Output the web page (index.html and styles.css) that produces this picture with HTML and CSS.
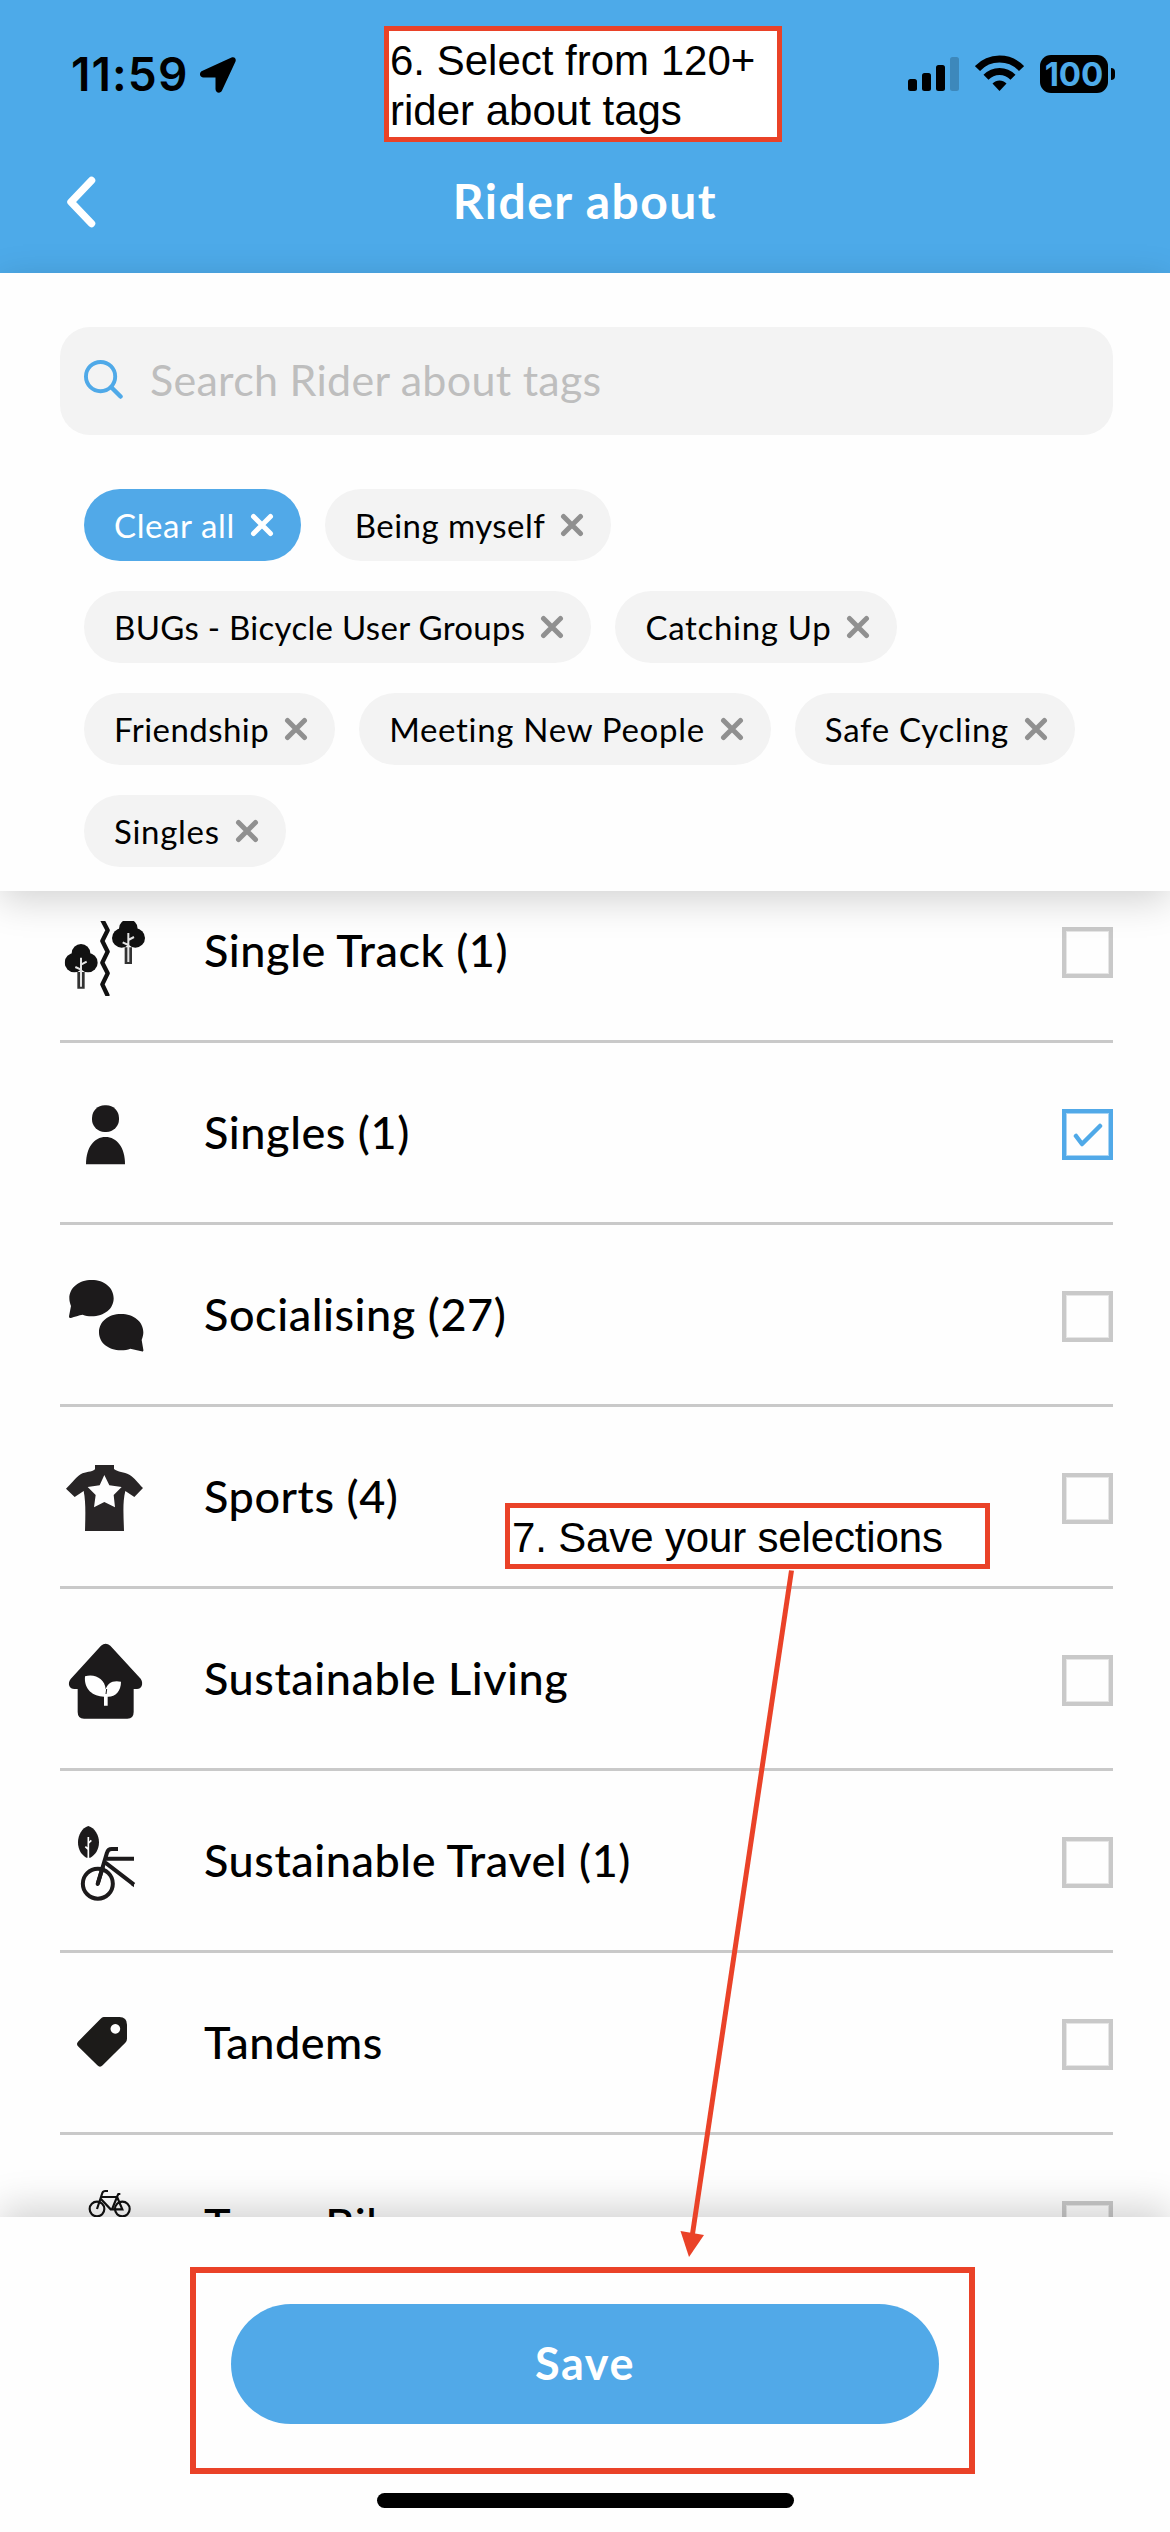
FILE: index.html
```
<!DOCTYPE html>
<html lang="en">
<head>
<meta charset="utf-8">
<title>Rider about</title>
<link rel="stylesheet" href="styles.css">
</head>
<body>
<svg class="defs" aria-hidden="true">
  <symbol id="close" viewBox="0 0 24 24"><path d="M3.5 3.5 20.5 20.5M20.5 3.5 3.5 20.5" fill="none" stroke="currentColor" stroke-width="5" stroke-linecap="round"/></symbol>
  <symbol id="tree" viewBox="0 0 100 136">
    <circle cx="49" cy="28" r="28" fill="#111"/><circle cx="29" cy="56" r="29" fill="#111"/><circle cx="70" cy="56" r="29" fill="#111"/>
    <path d="M38 84h22v50H38z" fill="#333"/>
    <path d="M49 128V41M49 62l17-9M49 77l-17-8" fill="none" stroke="#e4e4e4" stroke-width="6"/>
  </symbol>
</svg>
<div class="screen">
  <header class="header">
    <div class="status">
      <div class="clock">11:59
        <svg class="location" viewBox="0 0 36 36"><path d="M31.5 .5C34.5-.5 36.5 1.500 35.500 4.500L22 33.500C20.500 37 15.500 36 15.500 32V20.500H3.500C-.5 20.500-1.200 15.500 2 14Z"/></svg>
      </div>
      <div class="indicators">
        <svg class="signal" viewBox="0 0 51 34"><rect y="22" width="9" height="12" rx="2.5"/><rect x="14" y="16" width="9" height="18" rx="2.500"/><rect x="28" y="8" width="9" height="26" rx="2.500"/><rect x="42" width="9" height="34" rx="2.500" fill="#3d88bb"/></svg>
        <svg class="wifi" viewBox="0 0 49 36"><g fill="none" stroke="#000" stroke-width="7"><path d="M2.500 13.500C14.500 .8 34.500 .8 46.500 13.500"/><path d="M11 22.200C18.500 14.500 30.500 14.500 38 22.200"/></g><path d="M17.500 28.500C21.500 24.500 27.500 24.500 31.500 28.500L24.500 36Z"/></svg>
        <div class="battery"><span class="battery-level">100</span><span class="battery-tip"></span></div>
      </div>
    </div>
    <div class="titlebar">
      <svg class="back" viewBox="0 0 30 52"><path d="M25.500 4.500 5 26 25.500 47.500" fill="none" stroke="#fff" stroke-width="7.500" stroke-linecap="round" stroke-linejoin="round"/></svg>
      <h1 class="title">Rider about</h1>
    </div>
  </header>

  <section class="filters">
    <div class="search">
      <svg class="search-icon" viewBox="0 0 40 40"><g fill="none" stroke="#4fa9e8" stroke-width="4"><circle cx="17" cy="17" r="15"/><path d="M28 28l9.500 9.500" stroke-linecap="round" stroke-width="4.500"/></g></svg>
      <span class="placeholder">Search Rider about tags</span>
    </div>
    <div class="chips">
      <button class="chip chip-clear">Clear all<svg class="x"><use href="#close"/></svg></button>
      <button class="chip chip-snug">Being myself<svg class="x"><use href="#close"/></svg></button>
      <button class="chip chip-tight">BUGs - Bicycle User Groups<svg class="x"><use href="#close"/></svg></button>
      <button class="chip">Catching Up<svg class="x"><use href="#close"/></svg></button>
      <button class="chip chip-snug">Friendship<svg class="x"><use href="#close"/></svg></button>
      <button class="chip">Meeting New People<svg class="x"><use href="#close"/></svg></button>
      <button class="chip">Safe Cycling<svg class="x"><use href="#close"/></svg></button>
      <button class="chip">Singles<svg class="x"><use href="#close"/></svg></button>
    </div>
  </section>

  <main class="list">
    <div class="row">
      <svg class="icon" viewBox="60 48 270 270"><svg x="60" y="93" width="270" height="240" viewBox="60 93 270 240">
        <use href="#tree" x="74" y="162" width="100" height="136"/><use href="#tree" x="216" y="88" width="100" height="136"/>
        <path d="M187 90 203 121 187 153 203 185 187 218 203 250 187 283 202 315" fill="none" stroke="#111" stroke-width="13" stroke-linecap="round" stroke-linejoin="round"/></svg></svg>
      <span class="label">Single Track (1)</span><span class="box"></span>
    </div>
    <div class="row">
      <svg class="icon" viewBox="60 594 270 270"><g fill="#1c1a1b"><rect x="156" y="646" width="81" height="80" rx="38"/><path d="M138 823C138 773 162 741 196.500 741S255 773 255 823Z"/></g></svg>
      <span class="label">Singles (1)</span>
      <span class="box box-on"><svg class="tick" viewBox="0 0 30 24"><path d="M3 13 9 21 27 3" fill="none" stroke="#4fa9e8" stroke-width="4.500" stroke-linecap="round" stroke-linejoin="round"/></svg></span>
    </div>
    <div class="row">
      <svg class="icon" viewBox="60 60 270 270"><g fill="#1c1a1b"><path d="M155 90C193 90 221 113 221 145S193 199 155 199C144 199 136 197 128 194C117 196 104 200 93 204C89 205 87 203 87 199L93 168C90 160 88 153 88 145C88 113 117 90 155 90Z"/><path d="M243 192C205 192 177 215 177 247S205 301 243 301C254 301 263 299 271 296C282 299 293 301 304 304C309 305 311 303 310 299L305 270C308 262 310 255 310 247C310 215 281 192 243 192Z"/></g></svg>
      <span class="label">Socialising (27)</span><span class="box"></span>
    </div>
    <div class="row">
      <svg class="icon" viewBox="60 606 270 270"><path fill="#282526" fill-rule="evenodd" d="M165 645H222V657C233 667 252 665 268 674C284 683 294 699 309 714L283 741 256 723C247 758 251 800 252 843H135C136 800 138 758 131 723L104 741 78 716C94 701 108 682 122 673C137 664 155 668 165 658ZM193 675 179 706 143 711 167 735 162 772 193 756 225 772 221 735 245 711 208 706Z"/></svg>
      <span class="label">Sports (4)</span><span class="box"></span>
    </div>
    <div class="row">
      <svg class="icon" viewBox="60 72 270 270"><path fill="#1c1a1b" d="M183 107Q197 96 211 107L302 206Q309 216 305 228Q301 237 291 237H281V306Q281 326 262 326H132Q113 326 113 306V237H103Q92 237 88 228Q84 217 92 207Z"/><path fill="#fff" d="M135 199C165 190 195 207 197 238C202 221 217 209 243 215C243 243 226 261 203 260V287H192V260C160 260 131 239 135 199Z"/><path d="M198 252 200 237" stroke="#1c1a1b" stroke-width="3" fill="none"/></svg>
      <span class="label">Sustainable Living</span><span class="box"></span>
    </div>
    <div class="row">
      <svg class="icon" viewBox="60 618 270 270"><g fill="none" stroke="#1c1a1b" stroke-width="12"><circle cx="173.500" cy="821" r="45"/><path d="M173 822 201 728Q204 717 215 717H234"/><path d="M173 822 188 773" stroke-linecap="round"/><path d="M200 746.500H282M196 758 282 824"/></g><path d="M282 815V832L272 824Z" fill="#1c1a1b"/><path d="M145 648C164 654 177 675 177 697C177 719 166 735 151 743H139C124 735 114 719 114 697C114 675 126 654 145 648Z" fill="#1c1a1b"/><path d="M145 744V681M146 699 154 691M144 717 136 710" stroke="#fff" stroke-width="5" fill="none"/></svg>
      <span class="label">Sustainable Travel (1)</span><span class="box"></span>
    </div>
    <div class="row">
      <svg class="icon" viewBox="60 114 270 270"><path fill="#1c1b19" fill-rule="evenodd" d="M191 171H238Q261 171 261 194V236Q261 243 256 248L188 316Q180 324 172 316L114 259Q108 252 114 245L182 176Q186 171 191 171ZM226 192A14.500 14.500 0 1 0 226.100 192Z"/></svg>
      <span class="label">Tandems</span><span class="box"></span>
    </div>
    <div class="row">
      <svg class="icon" viewBox="60 660 270 270"><g fill="none" stroke="#111" stroke-width="6.500"><circle cx="171" cy="747" r="22"/><circle cx="247" cy="747" r="22"/><path d="M171 747 187 699Q189 693 196 693H204M183 711H232M180 714 212 748H247L231 710 235 702H241M216 748 231 711"/></g></svg>
      <span class="label">Town Bikes</span><span class="box"></span>
    </div>
  </main>

  <footer class="footer">
    <button class="save">Save</button>
    <div class="home-bar"></div>
  </footer>

  <div class="note note-select">6. Select from 120+<br>rider about tags</div>
  <div class="note note-save">7. Save your selections</div>
  <div class="frame"></div>
  <svg class="arrow" viewBox="670 1560 140 710"><path d="M791.500 1570.500 692.500 2234" stroke="#ea4228" stroke-width="5" fill="none"/><path d="M680.500 2231 704 2235 689 2257Z" fill="#ea4228"/></svg>
</div>
</body>
</html>
```

FILE: styles.css
```
* { box-sizing: border-box; }
body { margin: 0; background: #fff; }
.defs { position: absolute; width: 0; height: 0; }

.screen {
  position: relative;
  width: 1170px;
  height: 2532px;
  overflow: hidden;
  display: grid;
  grid-template-rows: 273px 618px 1326px 315px;
  background: #fefefe;
  color: #000;
  font-family: Lato, "Open Sans", sans-serif;
}

/* Header */
.header { background: #4daae9; }
.status {
  height: 148px;
  padding: 0 55px 0 71px;
  display: flex;
  justify-content: space-between;
  align-items: center;
}
.clock {
  display: flex;
  align-items: center;
  gap: 12px;
  font: 560 46px/1 Inter, sans-serif;
  letter-spacing: 1.1px;
}
.location { width: 36px; height: 36px; margin-top: 1px; }
.indicators { display: flex; align-items: center; gap: 16px; }
.signal { width: 51px; height: 34px; }
.wifi { width: 49px; height: 36px; margin-top: -2px; }
.battery { display: flex; align-items: center; gap: 3px; }
.battery-level {
  width: 68px;
  height: 38px;
  border-radius: 11px;
  background: #000;
  color: #4daae9;
  font: 700 33px/38px Inter, sans-serif;
  text-align: center;
}
.battery-tip { width: 4px; height: 12px; border-radius: 0 4px 4px 0; background: #000; }
.titlebar {
  height: 108px;
  padding: 0 66px;
  display: grid;
  grid-template-columns: 30px 1fr 30px;
  align-items: center;
}
.back { width: 30px; height: 52px; }
.title {
  margin: -2px 0 0;
  color: #fff;
  font-size: 48px;
  line-height: 60px;
  font-weight: 700;
  letter-spacing: 1.46px;
  text-align: center;
}

/* Search and selected tags */
.filters {
  z-index: 1;
  padding: 54px 57px 0 60px;
  background: #fefefe;
  box-shadow: 0 9px 36px rgba(0, 0, 0, .175);
}
.search {
  height: 108px;
  padding-left: 24px;
  border-radius: 30px;
  background: #f3f3f3;
  color: #bebebe;
  display: flex;
  align-items: center;
  gap: 27px;
  font-size: 43px;
  letter-spacing: .28px;
}
.search-icon { width: 39px; height: 39px; margin-top: -3px; }
.placeholder { margin-top: -3px; }
.chips {
  padding: 54px 24px 0;
  display: flex;
  flex-wrap: wrap;
  gap: 30px 24px;
}
.chip {
  height: 72px;
  padding: 0 27px 0 30px;
  border: 0;
  border-radius: 36px;
  background: #f3f3f3;
  color: #000;
  display: flex;
  align-items: center;
  gap: 15px;
  font: 400 33px/40px Lato, sans-serif;
  letter-spacing: .7px;
  white-space: nowrap;
}
.chip-snug { letter-spacing: .45px; }
.chip-tight { letter-spacing: .3px; }
.chip-clear { background: #51a9e8; color: #fff; letter-spacing: .6px; }
.x { width: 24px; height: 24px; color: #909090; }
.chip-clear .x { color: #fff; }

/* Tag list */
.list { overflow: hidden; padding: 0 57px 0 60px; }
.row {
  height: 182px;
  padding-top: 1px;
  border-bottom: 3px solid #c9c9c9;
  display: grid;
  grid-template-columns: 90px 1fr 51px;
  column-gap: 54px;
  align-items: center;
}
.row:first-child { margin-top: -30px; }
.icon { width: 90px; height: 90px; }
.label { margin-top: -3px; font-size: 45px; line-height: 54px; font-weight: 500; letter-spacing: .55px; }
.box {
  width: 51px;
  height: 51px;
  margin-top: 3px;
  border: 4px solid #c9c9c9;
  box-shadow: inset 0 0 0 1px #e6e6e6;
  display: grid;
  place-items: center;
}
.box-on { border-color: #51a9e8; box-shadow: inset 0 0 0 1px #a8d4f4; }
.tick { width: 30px; height: 24px; }

/* Footer */
.footer {
  z-index: 1;
  padding-top: 87px;
  background: #fefefe;
  box-shadow: 0 -9px 36px rgba(0, 0, 0, .175);
  display: flex;
  flex-direction: column;
  align-items: center;
}
.save {
  width: 708px;
  height: 120px;
  padding: 0 0 2px;
  border: 0;
  border-radius: 60px;
  background: #51a9e8;
  color: #fff;
  font: 700 45px/54px Lato, sans-serif;
  letter-spacing: 1.6px;
}
.home-bar { width: 417px; height: 15px; margin-top: 69px; border-radius: 8px; background: #000; }

/* Callouts drawn over the screen */
.note {
  position: absolute;
  z-index: 2;
  border: 5px solid #ea4228;
  background: #fff;
  font: 400 42px/50px "Liberation Sans", Arial, sans-serif;
  white-space: nowrap;
}
.note-select { left: 384px; top: 26px; width: 398px; height: 116px; padding: 5px 0 0 1px; }
.note-save { left: 505px; top: 1503px; width: 485px; height: 66px; padding: 5px 0 0 2px; letter-spacing: -.15px; }
.frame {
  position: absolute;
  z-index: 2;
  left: 190px;
  top: 2267px;
  width: 785px;
  height: 207px;
  border: 6px solid #ea4228;
}
.arrow { position: absolute; z-index: 2; left: 670px; top: 1560px; width: 140px; height: 710px; }
```
